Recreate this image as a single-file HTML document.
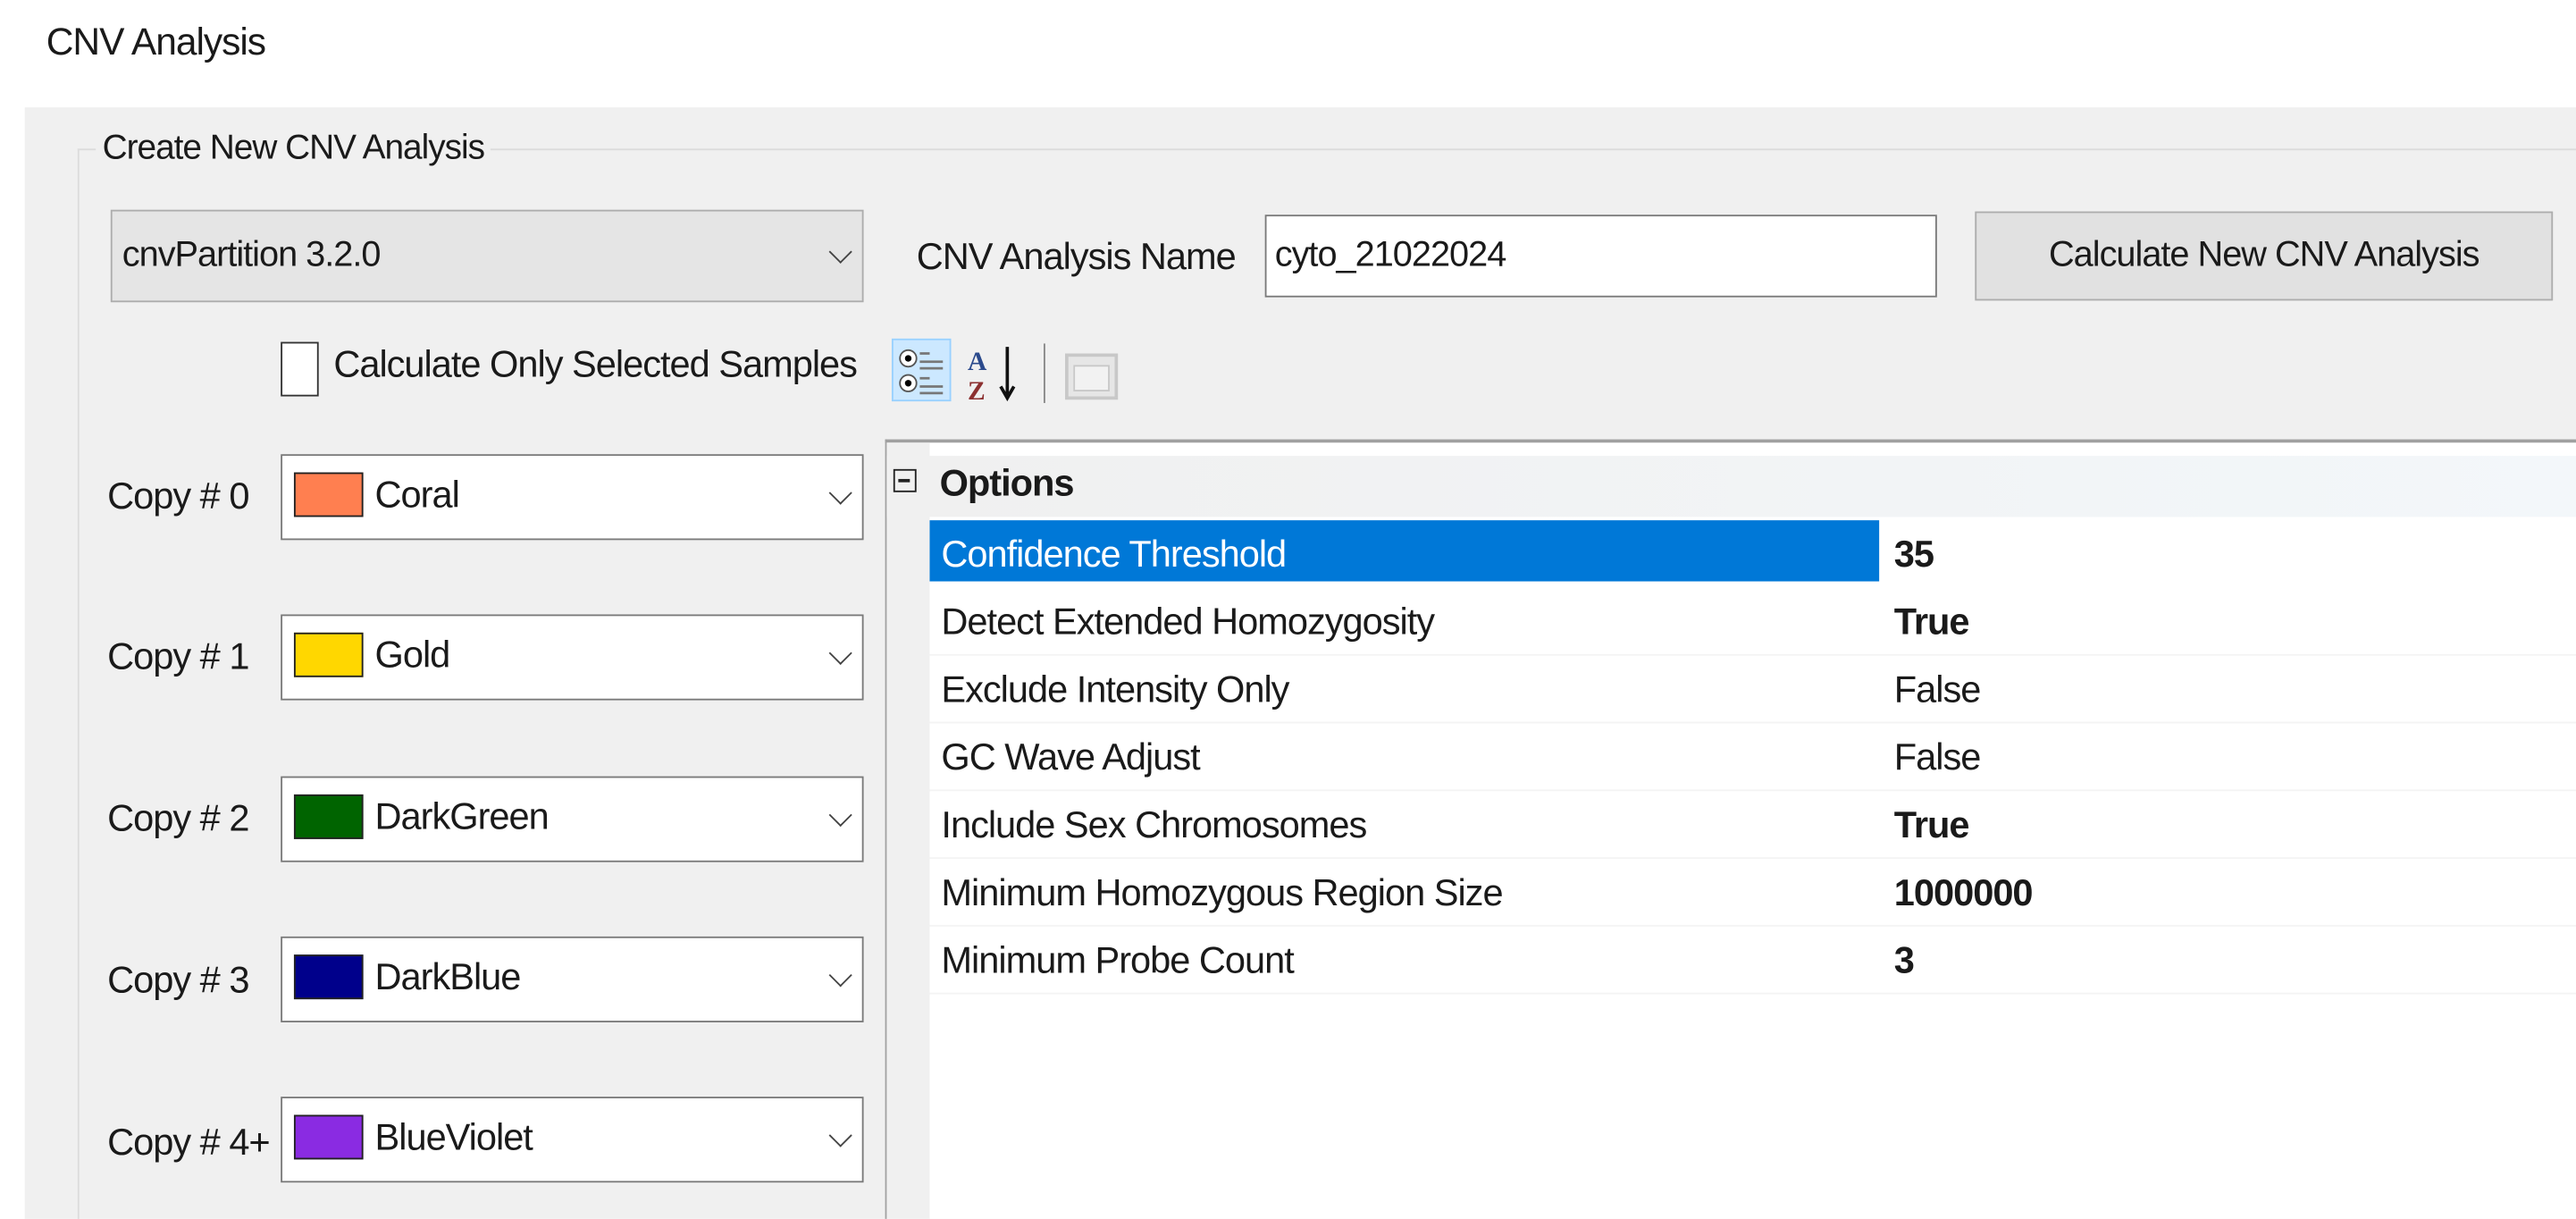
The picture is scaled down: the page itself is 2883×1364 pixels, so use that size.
<!DOCTYPE html>
<html><head><meta charset="utf-8"><style>
html,body{margin:0;padding:0;width:2883px;height:1364px;overflow:hidden;background:#fff}
#s{position:absolute;left:0;top:0;width:1560px;height:738px;transform:scale(1.8481);transform-origin:0 0;font-family:"Liberation Sans",sans-serif;font-size:22.5px;color:#1a1a1a;letter-spacing:-0.55px}
.a{position:absolute}
.t{position:absolute;white-space:nowrap;line-height:1}
.combo{position:absolute;background:#fff;border:1.5px solid #7a7a7a;box-sizing:border-box}
.chev{position:absolute;right:8px;top:50%;width:9px;height:9px;border-right:1.5px solid #444;border-bottom:1.5px solid #444;transform:translateY(-75%) rotate(45deg)}
.sw{position:absolute;left:7px;top:11px;width:42px;height:27px;border:1.5px solid #222;box-sizing:border-box}
.row{position:absolute;left:563px;right:0;height:41px;border-bottom:1px solid #f4f4f4}
.row .n{position:absolute;left:7px;top:9px;white-space:nowrap}
.row .v{position:absolute;left:584px;top:9px}
</style></head><body><div id="s">
<div class="t" style="left:28px;top:14px;font-size:23px">CNV Analysis</div>
<div class="a" style="left:15px;top:65px;right:0;bottom:0;background:#f0f0f0"></div>
<div class="a" style="left:47px;top:90px;right:0;bottom:0;border-left:1px solid #dcdcdc;border-top:1px solid #dcdcdc"></div>
<div class="t" style="left:58px;top:79px;background:#f0f0f0;padding:0 4px;font-size:21px">Create New CNV Analysis</div>

<div class="combo" style="left:67px;top:127px;width:456px;height:56px;background:#e5e5e5;border-color:#adadad"><div class="t" style="left:6px;top:16px;font-size:21.5px">cnvPartition 3.2.0</div><div class="chev"></div></div>
<div class="t" style="left:555px;top:145px">CNV Analysis Name</div>
<div class="a" style="left:766px;top:130px;width:407px;height:50px;background:#fff;border:1.5px solid #7a7a7a;box-sizing:border-box"><div class="t" style="left:5px;top:13px;font-size:21.5px">cyto_21022024</div></div>
<div class="a" style="left:1196px;top:128px;width:350px;height:54px;background:#e1e1e1;border:1.5px solid #adadad;box-sizing:border-box"><div class="t" style="left:0;right:0;top:15px;text-align:center;font-size:21.5px">Calculate New CNV Analysis</div></div>

<div class="a" style="left:170px;top:207px;width:23px;height:33px;background:#fff;border:1.5px solid #333;box-sizing:border-box"></div>
<div class="t" style="left:202px;top:210px">Calculate Only Selected Samples</div>

<div class="a" style="left:540px;top:205px;width:36px;height:38px;background:#cce8ff;border:1px solid #99d1ff;box-sizing:border-box">
<svg width="36" height="38" viewBox="0 0 36 38"><circle cx="9" cy="11" r="5" fill="#fff" stroke="#555"/><circle cx="9" cy="11" r="2" fill="#000"/><circle cx="9" cy="26" r="5" fill="#fff" stroke="#555"/><circle cx="9" cy="26" r="2" fill="#000"/><g stroke="#777" stroke-width="1.5"><path d="M16 8h6M16 13h14M16 17h14M16 23h6M16 28h14M16 32h14"/></g></svg></div>
<div class="a" style="left:584px;top:207px;width:40px;height:38px"><svg width="40" height="38" viewBox="0 0 40 38"><text x="2" y="17" font-family="Liberation Serif" font-weight="bold" font-size="16" fill="#2b4a8c">A</text><text x="2" y="35" font-family="Liberation Serif" font-weight="bold" font-size="16" fill="#8c3030">Z</text><path d="M26 3v30M22 27l4 7 4-7" stroke="#111" stroke-width="2" fill="none"/></svg></div>
<div class="a" style="left:632px;top:208px;width:1px;height:36px;background:#888"></div>
<div class="a" style="left:645px;top:214px;width:32px;height:28px;border:2px solid #c8c8c8;box-sizing:border-box;background:#e6e6e6"><div class="a" style="left:3px;top:5px;right:3px;bottom:3px;border:1px solid #c8c8c8;background:#f2f2f2"></div></div>

<div class="a" style="left:536px;top:266px;right:0;bottom:0;background:#fff;border-top:2px solid #a0a0a0;border-left:1.5px solid #a0a0a0"></div>
<div class="a" style="left:537px;top:268px;width:26px;bottom:0;background:#f0f0f0"></div>
<div class="a" style="left:537px;top:276px;right:0;height:37px;background:linear-gradient(90deg,#f0f0f0,#f3f7fa)"></div>
<div class="a" style="left:541px;top:284px;width:14px;height:14px;border:1.5px solid #222;box-sizing:border-box"><div class="a" style="left:2px;top:5px;width:7px;height:1.5px;background:#222"></div></div>
<div class="t" style="left:569px;top:282px;font-weight:bold">Options</div>

<div class="a" style="left:563px;top:315px;width:575px;height:37px;background:#0078d7"></div>
<div class="row" style="top:313px;border:none"><div class="n" style="color:#fff;top:10px">Confidence Threshold</div><div class="v" style="font-weight:bold;top:10px">35</div></div>
<div class="row" style="top:355px"><div class="n">Detect Extended Homozygosity</div><div class="v" style="font-weight:bold">True</div></div>
<div class="row" style="top:396px"><div class="n">Exclude Intensity Only</div><div class="v">False</div></div>
<div class="row" style="top:437px"><div class="n">GC Wave Adjust</div><div class="v">False</div></div>
<div class="row" style="top:478px"><div class="n">Include Sex Chromosomes</div><div class="v" style="font-weight:bold">True</div></div>
<div class="row" style="top:519px"><div class="n">Minimum Homozygous Region Size</div><div class="v" style="font-weight:bold">1000000</div></div>
<div class="row" style="top:560px"><div class="n">Minimum Probe Count</div><div class="v" style="font-weight:bold">3</div></div>

<div class="t" style="left:65px;top:290px">Copy # 0</div>
<div class="combo" style="left:170px;top:275px;width:353px;height:52px"><div class="sw" style="background:#ff7f50;top:10px"></div><div class="t" style="left:56px;top:13px">Coral</div><div class="chev"></div></div>
<div class="t" style="left:65px;top:387px">Copy # 1</div>
<div class="combo" style="left:170px;top:372px;width:353px;height:52px"><div class="sw" style="background:#ffd700;top:10px"></div><div class="t" style="left:56px;top:13px">Gold</div><div class="chev"></div></div>
<div class="t" style="left:65px;top:485px">Copy # 2</div>
<div class="combo" style="left:170px;top:470px;width:353px;height:52px"><div class="sw" style="background:#006400;top:10px"></div><div class="t" style="left:56px;top:13px">DarkGreen</div><div class="chev"></div></div>
<div class="t" style="left:65px;top:583px">Copy # 3</div>
<div class="combo" style="left:170px;top:567px;width:353px;height:52px"><div class="sw" style="background:#00008b;top:10px"></div><div class="t" style="left:56px;top:13px">DarkBlue</div><div class="chev"></div></div>
<div class="t" style="left:65px;top:681px">Copy # 4+</div>
<div class="combo" style="left:170px;top:664px;width:353px;height:52px"><div class="sw" style="background:#8a2be2;top:10px"></div><div class="t" style="left:56px;top:13px">BlueViolet</div><div class="chev"></div></div>
</div></body></html>
